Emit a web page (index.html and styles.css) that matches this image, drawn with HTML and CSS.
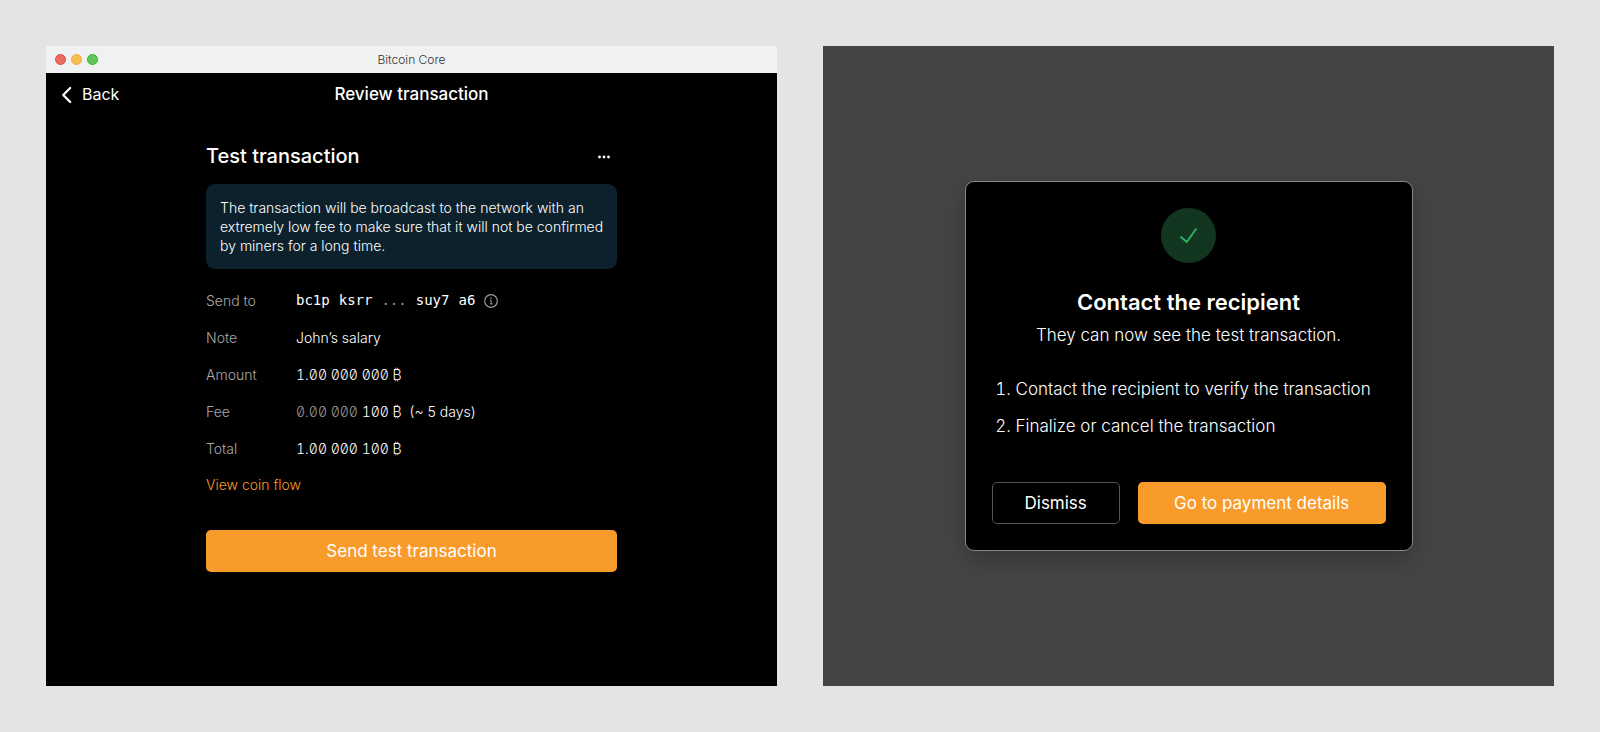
FILE: index.html
```html
<!DOCTYPE html>
<html lang="en">
<head>
<meta charset="utf-8">
<meta name="viewport" content="width=device-width, initial-scale=1">
<title>Bitcoin Core – Review transaction</title>
<link rel="stylesheet" href="styles.css">
</head>
<body>
<div class="board">
  <section class="window" aria-label="Bitcoin Core">
    <header class="titlebar">
      <div class="lights">
        <span class="light light-close"></span>
        <span class="light light-minimize"></span>
        <span class="light light-zoom"></span>
      </div>
      <span class="app-name">Bitcoin Core</span>
    </header>
    <nav class="navbar">
      <button class="back" type="button">
        <svg class="chevron" viewBox="0 0 11 18" fill="none" stroke="currentColor" stroke-width="2.2" stroke-linecap="round" stroke-linejoin="round" aria-hidden="true"><path d="M9.2 2 2.2 9l7 7"/></svg>
        Back
      </button>
      <h1 class="nav-title">Review transaction</h1>
    </nav>
    <main class="content">
      <div class="heading-row">
        <h2 class="heading">Test transaction</h2>
        <button class="more" type="button" aria-label="More options">
          <svg class="dots" viewBox="0 0 14 4" fill="currentColor" aria-hidden="true"><circle cx="2.5" cy="2" r="1.4"/><circle cx="7" cy="2" r="1.4"/><circle cx="11.5" cy="2" r="1.4"/></svg>
        </button>
      </div>
      <p class="notice">The transaction will be broadcast to the network with an extremely low fee to make sure that it will not be confirmed by miners for a long time.</p>
      <dl class="details">
        <dt>Send to</dt>
        <dd class="address">
          <span>bc1p</span><span>ksrr</span><span class="ellipsis">...</span><span>suy7</span><span>a6</span>
          <button class="info" type="button" aria-label="Show full address">
            <svg class="info-icon" viewBox="0 0 14 14" fill="none" stroke="currentColor" aria-hidden="true"><circle cx="7" cy="7" r="6.3" stroke-width="1.2"/><path d="M6 6.2h1.2v3.6M5.8 9.9h2.8"/><circle cx="7" cy="4.2" r=".4"/></svg>
          </button>
        </dd>
        <dt>Note</dt>
        <dd>John’s salary</dd>
        <dt>Amount</dt>
        <dd class="amount">1.00 000 000 ₿</dd>
        <dt>Fee</dt>
        <dd><span class="amount"><span class="faded">0.00 000</span> 100 ₿</span>&nbsp; (~ 5 days)</dd>
        <dt>Total</dt>
        <dd class="amount">1.00 000 100 ₿</dd>
      </dl>
      <a class="coin-flow" href="#coin-flow">View coin flow</a>
      <button class="button button-primary" type="button">Send test transaction</button>
    </main>
  </section>

  <section class="window window-dimmed">
    <div class="modal" role="dialog" aria-labelledby="modal-title">
      <svg class="success" viewBox="0 0 55 55" fill="none" aria-hidden="true"><circle cx="27.5" cy="27.5" r="27.5" fill="#133620"/><path d="M20 29 25.8 34 35 21" stroke="#2cb966" stroke-width="1.8" stroke-linecap="round" stroke-linejoin="round"/></svg>
      <h2 class="modal-title" id="modal-title">Contact the recipient</h2>
      <p class="modal-text">They can now see the test transaction.</p>
      <ol class="steps">
        <li>Contact the recipient to verify the transaction</li>
        <li>Finalize or cancel the transaction</li>
      </ol>
      <div class="actions">
        <button class="button button-outline" type="button">Dismiss</button>
        <button class="button button-primary button-wide" type="button">Go to payment details</button>
      </div>
    </div>
  </section>
</div>
</body>
</html>
```
FILE: styles.css
```css
* {
  box-sizing: border-box;
}

body {
  margin: 0;
  background: #e4e4e4;
  color: #fff;
  font-family: Inter, "Liberation Sans", sans-serif;
  font-size: 14px;
  font-weight: 300;
  line-height: 19px;
}

h1, h2, p, dl, dd, ol {
  margin: 0;
  padding: 0;
}

button {
  margin: 0;
  padding: 0;
  border: 0;
  background: none;
  color: inherit;
  font: inherit;
  cursor: pointer;
}

svg {
  display: block;
}

.board {
  display: grid;
  grid-template-columns: 1fr 1fr;
  gap: 46px;
  min-height: 100vh;
  padding: 46px;
}

.window {
  display: flex;
  flex-direction: column;
  background: #000;
}

.window-dimmed {
  align-items: center;
  justify-content: center;
  background: #454545;
}

.titlebar {
  display: grid;
  grid-template-columns: 1fr auto 1fr;
  align-items: center;
  height: 27px;
  padding: 0 9px;
  background: #f0f2f1;
}

.lights {
  display: flex;
  gap: 5px;
}

.light {
  width: 11px;
  height: 11px;
  border: 1px solid;
  border-radius: 50%;
}

.light-close {
  background: #ed6a5f;
  border-color: #e24b41;
}

.light-minimize {
  background: #f6be50;
  border-color: #f0a83a;
}

.light-zoom {
  background: #61c555;
  border-color: #3fae3a;
}

.app-name {
  color: #333;
  font-size: 12px;
}

.navbar {
  display: grid;
  grid-template-columns: 1fr auto 1fr;
  align-items: center;
  height: 43px;
  padding: 0 15px;
}

.back {
  display: flex;
  align-items: center;
  justify-self: start;
  gap: 10px;
  font-size: 16px;
  font-weight: 400;
}

.chevron {
  width: 11px;
  height: 18px;
}

.nav-title {
  font-size: 17px;
  font-weight: 500;
}

.content {
  display: flex;
  flex-direction: column;
  align-self: center;
  width: 100%;
  max-width: 411px;
  padding: 27px 0;
}

.heading-row {
  display: flex;
  align-items: center;
  justify-content: space-between;
  padding-right: 6px;
}

.heading {
  font-size: 20px;
  font-weight: 500;
  line-height: 27px;
}

.dots {
  width: 14px;
  height: 4px;
}

.notice {
  margin-top: 14px;
  padding: 14px 12px 14px 14px;
  border-radius: 9px;
  background: #0d212d;
}

.details {
  display: grid;
  grid-template-columns: 90px 1fr;
  row-gap: 18px;
  margin-top: 22px;
}

.details dt {
  color: #aaa;
}

.address {
  display: flex;
  align-items: center;
  gap: 9px;
  font-family: "DejaVu Sans Mono", monospace;
}

.ellipsis,
.faded {
  color: #999;
}

.info {
  color: #999;
}

.info-icon {
  width: 14px;
  height: 14px;
}

.amount {
  font-feature-settings: "tnum", "zero";
}

.coin-flow {
  align-self: flex-start;
  margin-top: 17px;
  color: #f99b2b;
  text-decoration: none;
}

.button {
  height: 42px;
  padding: 0 32px;
  border-radius: 5px;
  font-size: 17px;
  font-weight: 400;
}

.button-primary {
  background: #f99b2b;
}

.content .button {
  margin-top: 36px;
}

.button-outline {
  border: 1px solid #555;
}

.button-wide {
  flex: 1;
}

.modal {
  display: flex;
  flex-direction: column;
  width: 100%;
  max-width: 448px;
  padding: 26px;
  border: 1px solid #888;
  border-radius: 9px;
  background: #000;
  box-shadow: 0 9px 27px rgba(0, 0, 0, 0.25);
}

.success {
  align-self: center;
  width: 55px;
  height: 55px;
}

.modal-title {
  margin-top: 24px;
  font-size: 22px;
  font-weight: 600;
  line-height: 30px;
  text-align: center;
}

.modal-text {
  margin-top: 7px;
  font-size: 17px;
  line-height: 22px;
  text-align: center;
}

.steps {
  display: grid;
  gap: 15px;
  margin-top: 32px;
  padding-left: 24px;
  font-size: 17px;
  line-height: 22px;
}

.actions {
  display: flex;
  gap: 18px;
  margin-top: 45px;
}
```
